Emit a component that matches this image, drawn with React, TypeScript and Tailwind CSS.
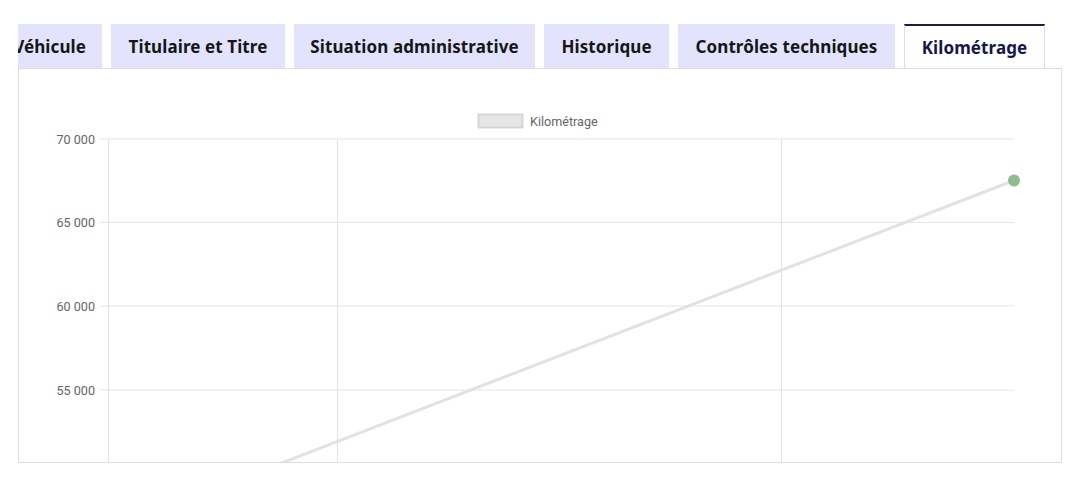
import React from "react";

const tabs = [
  { label: "Véhicule", w: "w-[102px] ml-[-18px] justify-end pr-[16px]" },
  { label: "Titulaire et Titre", w: "w-[174px] justify-center" },
  { label: "Situation administrative", w: "w-[241px] justify-center" },
  { label: "Historique", w: "w-[125px] justify-center" },
  { label: "Contrôles techniques", w: "w-[217px] justify-center" },
];

const yTicks = [
  { y: 139, label: "70 000" },
  { y: 222.5, label: "65 000" },
  { y: 306, label: "60 000" },
  { y: 390, label: "55 000" },
];

const KmChart = () => (
  <svg className="block h-[393px] w-[1042px]" viewBox="19 69 1042 393">
    {/* legend */}
    <rect x={478.5} y={114.5} width={44} height={13} fill="#e6e6e6" stroke="#d6d6d6" strokeWidth={2} />
    <text x={530} y={125.5} fontSize={12.6} fill="#666" fontFamily="Roboto, sans-serif">
      Kilométrage
    </text>
    {/* grid */}
    {yTicks.map((t) => (
      <g key={t.label}>
        <line x1={100} x2={1014} y1={t.y} y2={t.y} stroke="#e5e5e5" strokeWidth={1} />
        <text x={95} y={t.y + 4.5} textAnchor="end" fontSize={12.6} fill="#666" fontFamily="Roboto, sans-serif">
          {t.label}
        </text>
      </g>
    ))}
    {[108.5, 337.5, 781.5].map((x) => (
      <line key={x} x1={x} x2={x} y1={139} y2={470} stroke="#e3e3e3" strokeWidth={1} />
    ))}
    {/* data */}
    <line x1={1014} y1={180.5} x2={200} y2={494.5} stroke="#e2e2e2" strokeWidth={3} />
    <circle cx={1014} cy={180.5} r={6} fill="#8fbc8f" />
  </svg>
);

export default function App() {
  return (
    <div className="h-[486px] w-[1078px] bg-white pl-[18px] pt-[24px]" style={{ fontFamily: "'Noto Sans', sans-serif" }}>
      <div className="w-[1044px]">
        <div className="relative z-10 flex h-[44px] gap-[9px] overflow-hidden">
          {tabs.map((t) => (
            <div
              key={t.label}
              className={`flex h-[44px] shrink-0 items-center bg-[#e3e3fd] pt-[2px] text-[17px] font-bold tracking-[0.1px] text-[#161616] ${t.w}`}
            >
              {t.label}
            </div>
          ))}
          <div className="flex h-[45px] w-[141px] shrink-0 items-center justify-center border-x border-t-2 border-x-[#dddddd] border-t-[#1b1b52] bg-white pt-[1px] text-[17px] font-bold tracking-[0.1px] text-[#16164f]">
            Kilométrage
          </div>
        </div>
        <div className="h-[395px] overflow-hidden border border-[#dddddd]">
          <KmChart />
        </div>
      </div>
    </div>
  );
}
